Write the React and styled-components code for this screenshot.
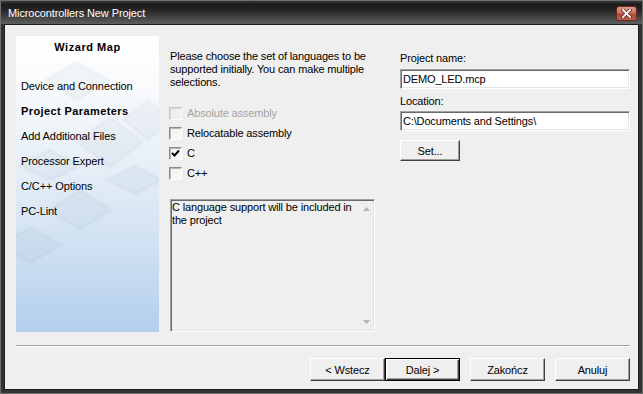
import React from 'react';
import styled, { createGlobalStyle } from 'styled-components';

const Global = createGlobalStyle`
  html, body { margin: 0; padding: 0; background: #2b2b2b; }
  body {
    font-family: 'Liberation Sans', Tahoma, Arial, sans-serif;
    font-size: 11px;
    letter-spacing: -0.15px;
    color: #000;
  }
  * { box-sizing: border-box; }
`;

const Window = styled.div`
  width: 643px;
  height: 394px;
  border: 1px solid #6e6e6e;
  background: #333333;
  padding: 0 3px 3px 3px;
  display: flex;
  flex-direction: column;
`;

const TitleBar = styled.div`
  height: 23px;
  margin: 0 -3px;
  padding: 0 5px 0 7px;
  display: flex;
  align-items: center;
  justify-content: space-between;
  background: linear-gradient(to bottom, #3a3a3a 0%, #1c1c1c 15%, #262626 40%, #444444 72%, #5e5e5e 100%);
`;

const TitleText = styled.span`
  font-family: 'Liberation Sans', Arial, sans-serif;
  font-size: 11px;
  letter-spacing: -0.1px;
  color: #ffffff;
  white-space: nowrap;
`;

const CloseButton = styled.div`
  width: 21px;
  height: 15px;
  border-radius: 3px;
  border: 1px solid #6e2a20;
  background: linear-gradient(to bottom, #dc9c8e 0%, #c8705e 45%, #ad4d3b 55%, #b95e4b 100%);
  display: flex;
  align-items: center;
  justify-content: center;
  margin-top: 1px;
`;

const Content = styled.div`
  flex: 1;
  border: 1px solid #1c1c1c;
  background: #efefef;
  padding: 11px 8px 0 11px;
  display: flex;
  flex-direction: column;
`;

const TopRow = styled.div`
  display: flex;
  height: 296px;
`;

const Panel = styled.div`
  position: relative;
  width: 143px;
  height: 296px;
  overflow: hidden;
  padding: 4px 0 0 5px;
  background: linear-gradient(to bottom, #ffffff 0%, #f8fafc 18%, #e6eef7 45%, #cfe0f2 72%, #b2cfec 100%);
`;

const PanelArt = styled.svg`
  position: absolute;
  left: 0;
  top: 0;
  width: 143px;
  height: 296px;
`;

const PanelTitle = styled.div`
  position: relative;
  font-weight: bold;
  font-size: 11px;
  letter-spacing: 0.55px;
  line-height: 14px;
  text-align: center;
  margin-left: -5px;
  margin-bottom: 20px;
`;

const StepItem = styled.div`
  position: relative;
  line-height: 25px;
  height: 25px;
  font-weight: ${p => (p.$active ? 'bold' : 'normal')};
  letter-spacing: ${p => (p.$active ? '0.4px' : '-0.1px')};
  white-space: nowrap;
`;

const Middle = styled.div`
  width: 205px;
  margin-left: 11px;
  display: flex;
  flex-direction: column;
`;

const Intro = styled.div`
  margin-top: 14px;
  line-height: 13px;
  white-space: nowrap;
`;

const CheckList = styled.div`
  margin-top: 14px;
  margin-left: -1px;
`;

const CheckRow = styled.div`
  height: 20px;
  display: flex;
  align-items: center;
  color: ${p => (p.$disabled ? '#a3a3a3' : '#000')};
`;

const Box = styled.div`
  width: 13px;
  height: 13px;
  border-style: solid;
  border-width: 1px;
  border-color: ${p => (p.$disabled ? '#c4c4c4 #fafafa #fafafa #c4c4c4' : '#8a8a8a #ffffff #ffffff #8a8a8a')};
  box-shadow: inset 1px 1px 0 ${p => (p.$disabled ? '#d8d8d8' : '#b8b8b8')};
  background: ${p => (p.$disabled ? '#efefef' : '#f6f6f6')};
  margin-right: 5px;
  display: flex;
  align-items: center;
  justify-content: center;
`;

const Memo = styled.div`
  margin-top: 16px;
  height: 133px;
  border-style: solid;
  border-width: 1px;
  border-color: #a0a0a0 #ffffff #ffffff #a0a0a0;
  box-shadow: inset 1px 1px 0 #6a6a6a, inset -1px -1px 0 #e4e4e4;
  padding: 1px;
  display: flex;
  background: #efefef;
`;

const MemoText = styled.div`
  flex: 1;
  line-height: 13px;
  white-space: nowrap;
`;

const ScrollCol = styled.div`
  width: 12px;
  margin-right: 1px;
  display: flex;
  flex-direction: column;
  justify-content: space-between;
  align-items: center;
  padding: 6px 0;
`;

const Right = styled.div`
  width: 230px;
  margin-left: 25px;
  display: flex;
  flex-direction: column;
  align-items: flex-start;
`;

const Label = styled.div`
  line-height: 13px;
  margin-top: ${p => p.$mt}px;
`;

const Field = styled.div`
  width: 230px;
  height: 20px;
  margin-top: ${p => p.$mt}px;
  border-style: solid;
  border-width: 1px;
  border-color: #a0a0a0 #ffffff #ffffff #a0a0a0;
  box-shadow: inset 1px 1px 0 #6a6a6a, inset -1px -1px 0 #e4e4e4;
  background: #ffffff;
  padding-left: 2px;
  display: flex;
  align-items: center;
  white-space: nowrap;
`;

const Button = styled.div`
  width: ${p => p.$w || 75}px;
  height: ${p => p.$h || 23}px;
  margin-top: ${p => p.$mt || 0}px;
  margin-left: ${p => p.$ml || 0}px;
  background: #efefef;
  border: 1px solid;
  border-color: ${p => (p.$default ? '#000 #000 #000 #000' : '#ffffff #404040 #404040 #ffffff')};
  box-shadow: ${p => (p.$default
    ? 'inset 1px 1px 0 #ffffff, inset -1px -1px 0 #404040, inset -2px -2px 0 #a0a0a0'
    : 'inset -1px -1px 0 #a0a0a0')};
  display: flex;
  align-items: center;
  justify-content: center;
  white-space: nowrap;
`;

const Separator = styled.div`
  margin-top: 13px;
  height: 2px;
  border-top: 1px solid #a0a0a0;
  border-bottom: 1px solid #ffffff;
`;

const ButtonRow = styled.div`
  margin-top: 11px;
  display: flex;
  justify-content: flex-end;
`;

const shapes = [
  [61, 45, 33, 19],
  [132, 84, 25, 20],
  [94, 106, 33, 26],
  [34, 129, 32, 15],
  [119, 144, 28, 14],
  [64, 174, 32, 20],
  [14, 209, 32, 18],
];

const Check = () => (
  <svg width="9" height="9" viewBox="0 0 9 9">
    <polyline points="1,4 3.5,6.5 8,1.5" fill="none" stroke="#000" strokeWidth="1.9" />
  </svg>
);

const CheckItem = ({ label, checked, disabled }) => (
  <CheckRow $disabled={disabled}>
    <Box $disabled={disabled}>{checked && <Check />}</Box>
    {label}
  </CheckRow>
);

export default function App() {
  return (
    <>
      <Global />
      <Window>
        <TitleBar>
          <TitleText>Microcontrollers New Project</TitleText>
          <CloseButton>
            <svg width="11" height="9" viewBox="0 0 11 9">
              <path d="M2 1 L9 8 M9 1 L2 8" stroke="#5a1d14" strokeWidth="3.2" strokeLinecap="square" />
              <path d="M2 1 L9 8 M9 1 L2 8" stroke="#ffffff" strokeWidth="1.8" strokeLinecap="square" />
            </svg>
          </CloseButton>
        </TitleBar>
        <Content>
          <TopRow>
            <Panel>
              <PanelArt viewBox="0 0 143 296">
                {shapes.map(([cx, cy, w, h], i) => (
                  <polygon
                    key={i}
                    points={`${cx - w},${cy} ${cx},${cy - h} ${cx + w},${cy} ${cx},${cy + h}`}
                    fill="rgba(110,130,150,0.06)"
                    stroke="rgba(110,130,150,0.035)"
                    strokeWidth="4"
                    strokeLinejoin="round"
                  />
                ))}
              </PanelArt>
              <PanelTitle>Wizard Map</PanelTitle>
              <StepItem>Device and Connection</StepItem>
              <StepItem $active>Project Parameters</StepItem>
              <StepItem>Add Additional Files</StepItem>
              <StepItem>Processor Expert</StepItem>
              <StepItem>C/C++ Options</StepItem>
              <StepItem>PC-Lint</StepItem>
            </Panel>
            <Middle>
              <Intro>
                Please choose the set of languages to be<br />
                supported initially. You can make multiple<br />
                selections.
              </Intro>
              <CheckList>
                <CheckItem label="Absolute assembly" disabled />
                <CheckItem label="Relocatable assembly" />
                <CheckItem label="C" checked />
                <CheckItem label="C++" />
              </CheckList>
              <Memo>
                <MemoText>
                  C language support will be included in<br />
                  the project
                </MemoText>
                <ScrollCol>
                  <svg width="7" height="4" viewBox="0 0 7 4"><polygon points="0,4 3.5,0 7,4" fill="#b4b4b4" /></svg>
                  <svg width="7" height="4" viewBox="0 0 7 4"><polygon points="0,0 7,0 3.5,4" fill="#b4b4b4" /></svg>
                </ScrollCol>
              </Memo>
            </Middle>
            <Right>
              <Label $mt={16}>Project name:</Label>
              <Field $mt={4}>DEMO_LED.mcp</Field>
              <Label $mt={6}>Location:</Label>
              <Field $mt={3}>C:\Documents and Settings\</Field>
              <Button $w={60} $h={21} $mt={9}>Set...</Button>
            </Right>
          </TopRow>
          <Separator />
          <ButtonRow>
            <Button>&lt; Wstecz</Button>
            <Button $default>Dalej &gt;</Button>
            <Button $ml={10}>Zakończ</Button>
            <Button $ml={10}>Anuluj</Button>
          </ButtonRow>
        </Content>
      </Window>
    </>
  );
}
